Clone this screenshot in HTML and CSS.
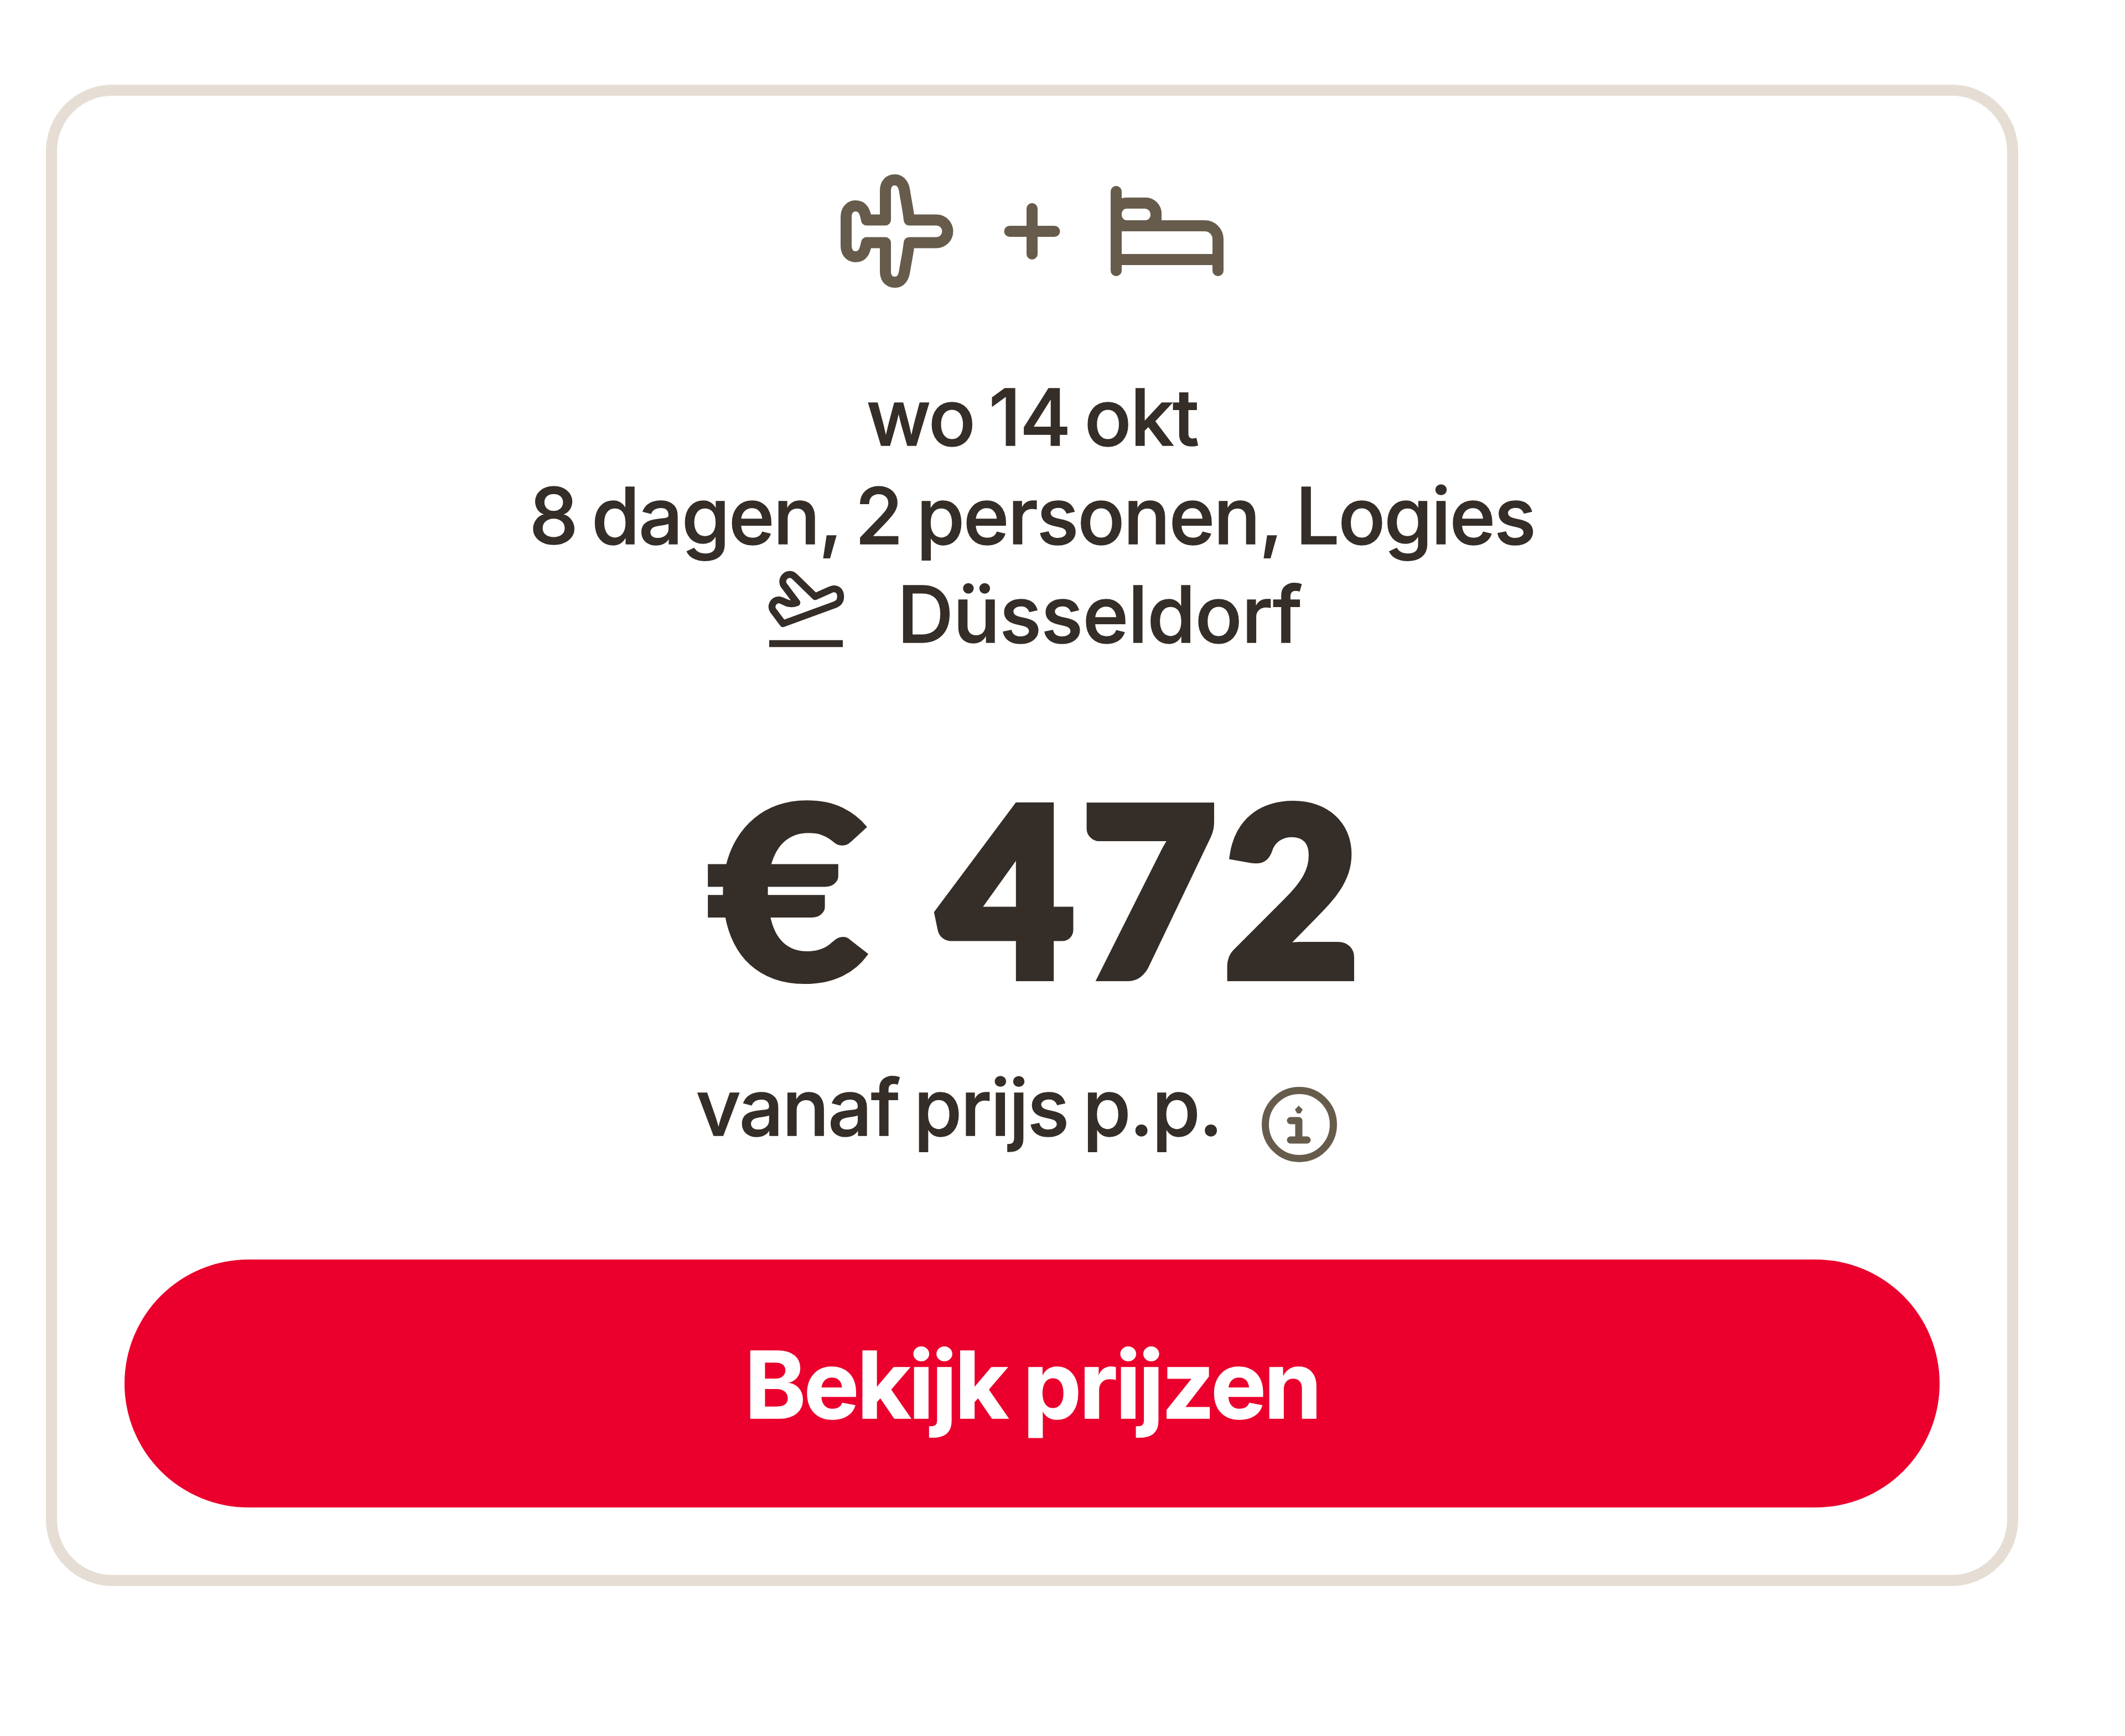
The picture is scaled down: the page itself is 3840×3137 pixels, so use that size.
FILE: index.html
```html
<!DOCTYPE html>
<html lang="nl">
<head>
    <meta charset="utf-8">
    <title>Bekijk prijzen</title>
    <link rel="stylesheet" href="styles.css">
</head>
<body>
    <div class="price-card">
        <div class="package-icons">
            <svg width="240" height="240" viewBox="0 0 240 240">
                <path d="M99 99.5V46C99 34 106 27 116 27C127 27 132 37 133.500 46C135 58 140 80 142 99.500H191a20.500 20.500 0 0 1 0 41H142C140 160 135 182 133.500 193C132 203 127 212 116 212C106 212 99 205 99 193V140.500H65C62 156 58 166 45 166C34 166 28 157 28 146V94C28 83 34 74 45 74C58 74 62 84 65 99.500Z"></path>
            </svg>
            <svg width="240" height="240" viewBox="0 0 240 240">
                <path d="M79.500 120h81M120 79v82"></path>
            </svg>
            <svg width="240" height="240" viewBox="0 0 240 240">
                <path d="M28 48v143M28 110h160a24 24 0 0 1 24 24v57M28 171h184M80 69a20 20 0 0 1 20 20v20"></path>
                <rect x="28" y="69" width="72" height="41" rx="19"></rect>
            </svg>
        </div>

        <div class="details">
            <div>wo 14 okt</div>
            <div>8 dagen, 2 personen, Logies</div>
            <div class="departure">
                <svg width="160" height="160" viewBox="0 0 160 160">
                    <path d="M38 106L20 82C15 74 20 64 30 63C38 62 46 75 63 68L39 36C33 24 47 11 58 20L96 57L123 45C133 40 142 45 142 57C142 65 139 69 131 72Z"></path>
                    <path d="M13 142h133"></path>
                </svg>
                <span>Düsseldorf</span>
            </div>
        </div>

        <div class="price"><span class="currency">€</span> 472</div>

        <div class="price-label">
            <span>vanaf prijs p.p.</span>
            <svg width="160" height="160" viewBox="0 0 160 160">
                <circle cx="80" cy="80" r="61.500"></circle>
                <path d="M64 73h15v35M64 108h30"></path>
                <path class="dot" d="M79 46l7 7l-4 7h-6l-4-7z"></path>
            </svg>
        </div>

        <button class="cta">Bekijk prijzen</button>
    </div>
</body>
</html>
```
FILE: styles.css
```css
body {
    margin: 0;
    background: #fff;
    color: #352d27;
    font-family: Inter, "Noto Sans", sans-serif;
    overflow: hidden;
}

.price-card {
    box-sizing: border-box;
    width: 3564px;
    margin: 153px 0 0 83px;
    padding: 125px 122px 122px;
    border: 20px solid #e6ded4;
    border-radius: 120px;
}

svg {
    display: block;
    flex: none;
    fill: none;
    stroke: currentColor;
    stroke-linecap: round;
    stroke-linejoin: round;
}

.package-icons {
    display: flex;
    justify-content: center;
    gap: 4px;
    color: #675c4c;
    stroke-width: 20;
}

.details,
.price-label {
    font-size: 141px;
    font-weight: 500;
    line-height: 178px;
    letter-spacing: -2.3px;
    word-spacing: -9px;
    -webkit-text-stroke: 1.5px currentColor;
}

.details {
    margin-top: 127px;
    text-align: center;
}

.departure {
    display: flex;
    justify-content: center;
    gap: 84px;
    letter-spacing: -0.8px;
}

.departure svg {
    stroke-width: 12.5;
    stroke-linecap: butt;
}

.price {
    height: 440px;
    margin-top: 177px;
    padding-left: 31px;
    font-family: Lato, sans-serif;
    font-size: 420px;
    font-weight: 900;
    line-height: 440px;
    letter-spacing: 14px;
    text-align: center;
    -webkit-text-stroke: 18px currentColor;
}

/* the euro sign is drawn a bit wider than the digits */
.currency {
    display: inline-block;
    margin-right: 24px;
    font-size: 438px;
    line-height: 1;
    transform: translate(-14px, 7px) scaleX(1.155);
    transform-origin: left;
    -webkit-text-stroke: 8px currentColor;
}

.price-label {
    display: flex;
    justify-content: center;
    margin-top: 96px;
}

.price-label svg {
    margin: 40px 44px -22px 61px;
    color: #675c4c;
    stroke-width: 13;
}

.price-label .dot {
    fill: currentColor;
    stroke: none;
}

.cta {
    display: block;
    width: 100%;
    height: 448px;
    margin-top: 186px;
    padding: 4px 0 0;
    border: none;
    border-radius: 224px;
    background: #eb002d;
    color: #fff;
    font-family: inherit;
    font-size: 168px;
    font-weight: 700;
    letter-spacing: -4px;
    word-spacing: -6px;
    cursor: pointer;
    -webkit-text-stroke: 1.5px currentColor;
}
```
